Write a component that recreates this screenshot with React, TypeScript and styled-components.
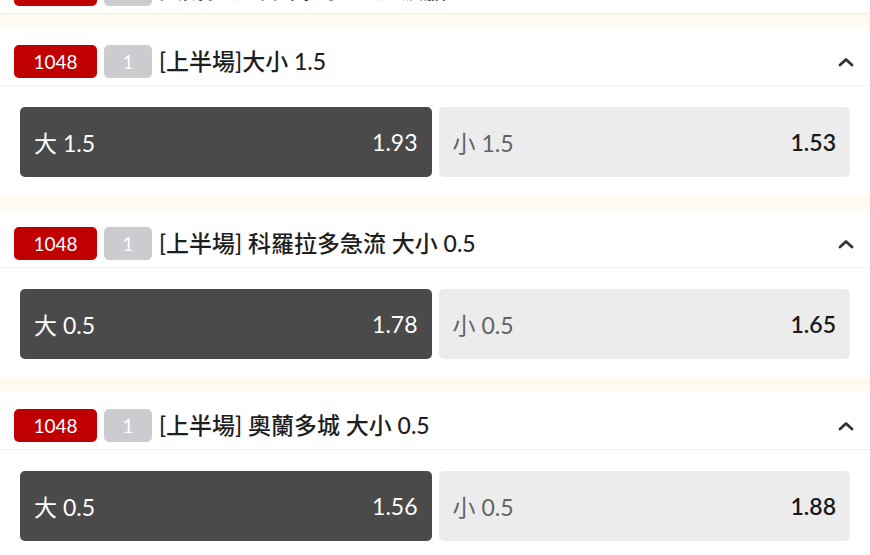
import React from 'react';
import styled, { createGlobalStyle } from 'styled-components';

const GlobalStyle = createGlobalStyle`
  html, body {
    margin: 0;
    padding: 0;
    background: #ffffff;
    font-family: Lato, "Noto Sans CJK TC", sans-serif;
    overflow: hidden;
  }
`;

const Page = styled.div`
  width: 870px;
  margin-top: -42px;
  display: flex;
  flex-direction: column;
`;

const Market = styled.section`
  display: flex;
  flex-direction: column;
  background: #ffffff;
`;

const Gap = styled.div`
  height: 16px;
  background: linear-gradient(to bottom, #fff9ee, #fffdf9);
`;

const Header = styled.div`
  display: flex;
  align-items: center;
  gap: 7px;
  height: 33px;
  padding: 15px 14px 7px 14px;
  border-bottom: 1px solid #f1f1f1;
`;

const Badge = styled.span<{ $tone: 'red' | 'grey' }>`
  display: inline-flex;
  align-items: center;
  justify-content: center;
  height: 33px;
  width: ${({ $tone }) => ($tone === 'red' ? '83px' : '48px')};
  border-radius: 5px;
  background: ${({ $tone }) => ($tone === 'red' ? '#c00000' : '#cbcbd0')};
  color: #ffffff;
  font-size: 19px;
  font-family: Lato, sans-serif;
`;

const Title = styled.div`
  flex: 1;
  font-size: 23px;
  line-height: 33px;
  font-weight: 500;
  color: #1e1e1e;
  white-space: nowrap;
`;

const Caret = styled.svg`
  width: 16px;
  height: 10px;
  margin-right: 2px;
`;

const Body = styled.div`
  display: grid;
  grid-template-columns: 1fr 1fr;
  gap: 7px;
  padding: 21px 20px 19px 20px;
`;

const Odd = styled.div<{ $active?: boolean }>`
  height: 70px;
  display: flex;
  align-items: center;
  justify-content: space-between;
  padding: 0 14px;
  border-radius: 5px;
  background: ${({ $active }) => ($active ? '#4a4a4a' : '#ececec')};
  font-size: 23px;
`;

const Label = styled.span<{ $active?: boolean }>`
  color: ${({ $active }) => ($active ? '#ffffff' : '#636363')};
`;

const Price = styled.span<{ $active?: boolean }>`
  color: ${({ $active }) => ($active ? '#ffffff' : '#1a1a1a')};
  font-weight: ${({ $active }) => ($active ? 400 : 600)};
`;

type MarketData = {
  title: string;
  open: boolean;
  over?: [string, string];
  under?: [string, string];
};

const markets: MarketData[] = [
  { title: '奧蘭多城 科羅拉多急流 波膽', open: false },
  { title: '[上半場]大小 1.5', open: true, over: ['大 1.5', '1.93'], under: ['小 1.5', '1.53'] },
  { title: '[上半場] 科羅拉多急流 大小 0.5', open: true, over: ['大 0.5', '1.78'], under: ['小 0.5', '1.65'] },
  { title: '[上半場] 奧蘭多城 大小 0.5', open: true, over: ['大 0.5', '1.56'], under: ['小 0.5', '1.88'] },
];

const UpCaret = () => (
  <Caret viewBox="0 0 16 10">
    <polyline points="2,8 8,2.5 14,8" fill="none" stroke="#333" strokeWidth="2.8" strokeLinecap="round" strokeLinejoin="round" />
  </Caret>
);

export default function App() {
  return (
    <>
      <GlobalStyle />
      <Page>
        {markets.map((m, i) => (
          <React.Fragment key={i}>
            {i > 0 && <Gap />}
            <Market>
              <Header>
                <Badge $tone="red">1048</Badge>
                <Badge $tone="grey">1</Badge>
                <Title>{m.title}</Title>
                {m.open && <UpCaret />}
              </Header>
              {m.open && m.over && m.under && (
                <Body>
                  <Odd $active>
                    <Label $active>{m.over[0]}</Label>
                    <Price $active>{m.over[1]}</Price>
                  </Odd>
                  <Odd>
                    <Label>{m.under[0]}</Label>
                    <Price>{m.under[1]}</Price>
                  </Odd>
                </Body>
              )}
            </Market>
          </React.Fragment>
        ))}
      </Page>
    </>
  );
}
